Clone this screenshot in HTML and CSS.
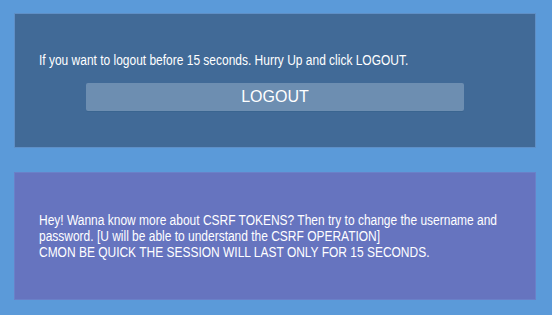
FILE: index.html
```html
<!DOCTYPE html>
<html>
<head>
<meta charset="utf-8">
<link rel="stylesheet" href="styles.css">
</head>
<body>
<div class="page">
  <div class="card card-logout">
    <p class="msg">If you want to logout before 15 seconds. Hurry Up and click LOGOUT.</p>
    <button class="btn">LOGOUT</button>
  </div>
  <div class="card card-info">
    <p class="msg">Hey! Wanna know more about CSRF TOKENS? Then try to change the username and password. [U will be able to understand the CSRF OPERATION]<br>CMON BE QUICK THE SESSION WILL LAST ONLY FOR 15 SECONDS.</p>
  </div>
</div>
</body>
</html>
```

FILE: styles.css
```css
html, body {
  margin: 0;
  padding: 0;
  background: #5b9ad9;
  font-family: "Liberation Sans", Arial, sans-serif;
  color: #ffffff;
}
.page {
  width: 552px;
  height: 315px;
  box-sizing: border-box;
  padding: 13px 16px 15px 14px;
  display: flex;
  flex-direction: column;
  gap: 24px;
}
.card {
  box-sizing: border-box;
  border: 1px solid #5f8fc6;
  overflow: hidden;
}
.card-logout {
  background: #416a97;
  height: 135px;
  padding: 38px 24px 0 24px;
  display: flex;
  flex-direction: column;
  align-items: center;
}
.card-info {
  background: #6674bf;
  border-color: #6a80c8;
  height: 128px;
  padding: 39px 24px 0 24px;
}
.msg {
  margin: 0;
  width: 552px;
  font-family: "Liberation Sans", Arial, sans-serif;
  font-size: 14px;
  line-height: 16px;
  align-self: flex-start;
  transform: scaleX(0.855);
  transform-origin: 0 0;
}
.btn {
  margin-top: 15px;
  width: 378px;
  height: 28px;
  border: none;
  border-radius: 2px;
  background: #6d8eb1;
  box-shadow: 0 1px 0 #3a6590;
  color: #ffffff;
  font-family: "Liberation Sans", Arial, sans-serif;
  font-size: 16px;
  padding: 0;
}
```
